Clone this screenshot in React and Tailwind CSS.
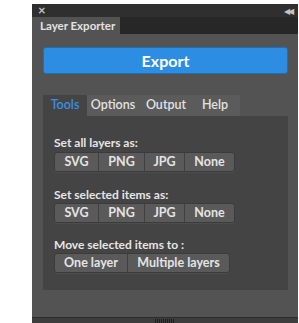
const FormatRow = ({ items }) => (
  <div className="flex h-[20px] w-fit rounded-[3px] border border-[#3b3b3b] bg-[#5a5a5a] shadow-[0_1px_0_rgba(255,255,255,0.05)]">
    {items.map(([label, w], i) => (
      <div
        key={label}
        className={`flex items-center justify-center text-[12.5px] font-bold text-[#e4e4e4] ${
          i > 0 ? "border-l border-[#404040]" : ""
        }`}
        style={{ width: w }}
      >
        {label}
      </div>
    ))}
  </div>
);

const formats = [
  ["SVG", 43],
  ["PNG", 46],
  ["JPG", 40],
  ["None", 50],
];

export default function App() {
  return (
    <div
      className="flex h-[323px] w-[299px] bg-white pl-[32px] pr-[2px] pt-[4px]"
      style={{ fontFamily: "Lato, 'Open Sans', sans-serif" }}
    >
      <div className="flex flex-1 flex-col bg-[#535353]">
        {/* title bar */}
        <div className="flex h-[13px] items-center justify-between bg-[#2f2f2f] px-[6px] text-[#c4c4c4]">
          <span className="text-[13px] font-bold leading-none">×</span>
          <span className="text-[8px] leading-none tracking-[-2px]">◀◀</span>
        </div>
        {/* panel tab bar */}
        <div className="flex h-[17px] bg-[#272727]">
          <div className="flex w-[88px] items-center bg-[#535353] pl-[8px] text-[11.5px] font-bold text-[#e2e2e2]">
            Layer Exporter
          </div>
        </div>
        {/* body */}
        <div className="flex flex-1 flex-col px-[11px] pr-[10px] pt-[13px]">
          <button className="flex h-[27px] w-full items-center justify-center rounded-[3px] border border-[#1f6fb8] bg-[#2d8de3] text-[16px] font-bold text-white">
            Export
          </button>

          <div className="mt-[21px] flex h-[21px] w-[245px] text-[12.5px] font-semibold">
            <div className="flex w-[44px] items-center justify-center bg-[#444444] text-[#3b8fe6]">Tools</div>
            <div className="flex w-[153px] items-center bg-[#5b5b5b] text-[#e2e2e2]">
              <span className="w-[52px] text-center">Options</span>
              <span className="w-[54px] text-center">Output</span>
              <span className="w-[44px] text-center">Help</span>
            </div>
          </div>

          <div className="flex h-[174px] w-[245px] flex-col bg-[#444444] px-[11px] pt-[20px]">
            <div className="text-[12px] font-bold leading-[14px] text-[#e6e6e6]">Set all layers as:</div>
            <div className="mt-[2px]">
              <FormatRow items={formats} />
            </div>
            <div className="mt-[16px] text-[12px] font-bold leading-[14px] text-[#e6e6e6]">Set selected items as:</div>
            <div className="mt-[1px]">
              <FormatRow items={formats} />
            </div>
            <div className="mt-[15px] text-[12px] font-bold leading-[14px] text-[#e6e6e6]">Move selected items to :</div>
            <div className="mt-[1px]">
              <FormatRow
                items={[
                  ["One layer", 72],
                  ["Multiple layers", 102],
                ]}
              />
            </div>
          </div>
        </div>
        {/* bottom strip */}
        <div className="flex h-[6px] items-center justify-center border-t border-[#2c2c2c] bg-[#3d3d3d]">
          <div className="h-[4px] w-[20px] bg-[repeating-linear-gradient(90deg,#1e1e1e_0_1px,transparent_1px_2px)]" />
        </div>
      </div>
    </div>
  );
}
